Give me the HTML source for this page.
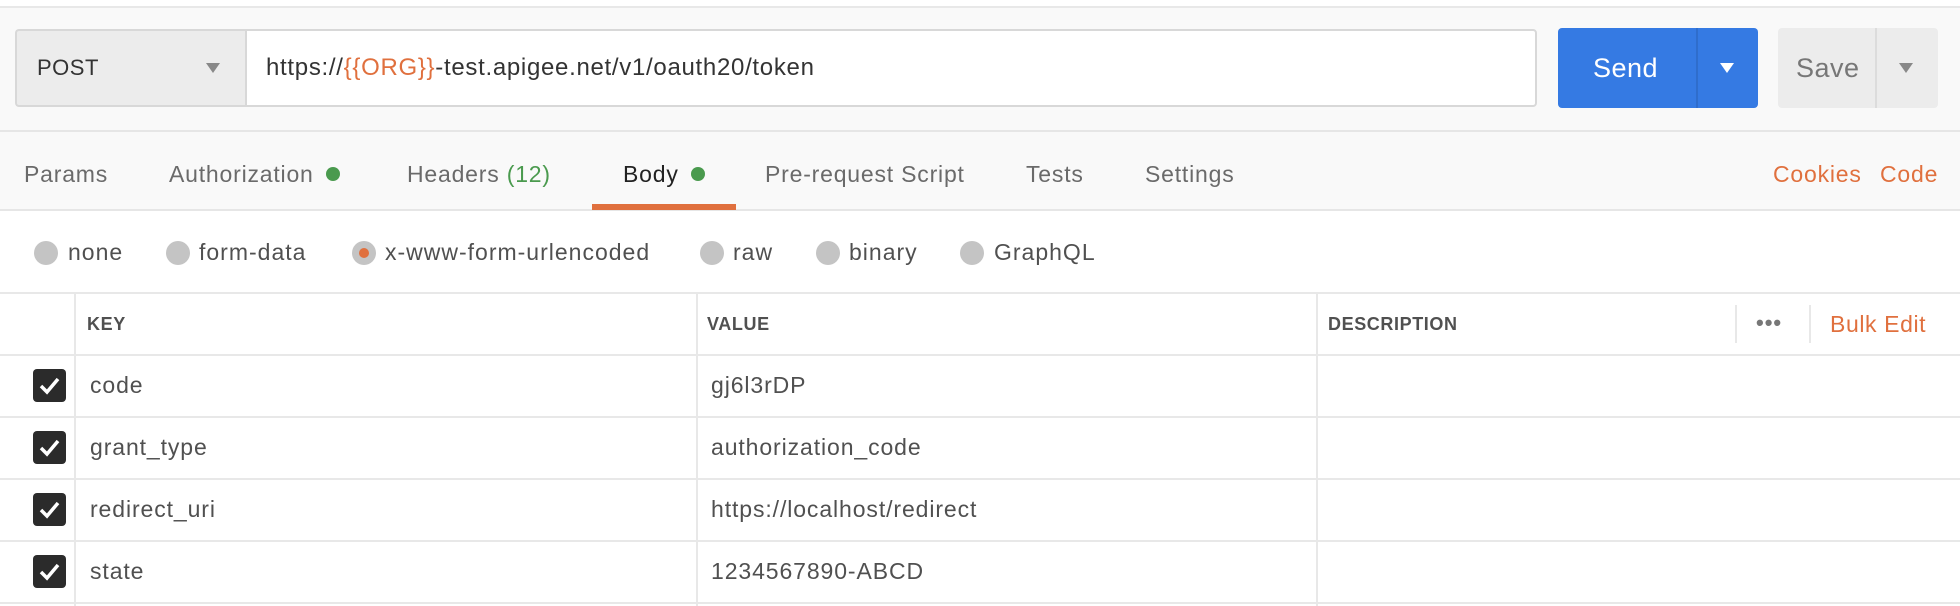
<!DOCTYPE html>
<html><head><meta charset="utf-8"><style>
*{box-sizing:border-box;margin:0;padding:0}
body{width:1960px;height:606px;overflow:hidden;background:#fff;font-family:"Liberation Sans",sans-serif;color:#505050;position:relative}
.a{position:absolute;white-space:nowrap}
.top{left:0;top:6px;width:1960px;height:124px;background:#f9f9f9;border-top:2px solid #e8e8e8}
.tabs{left:0;top:130px;width:1960px;height:81px;background:#f9f9f9;border-top:2px solid #e6e6e6;border-bottom:2px solid #e6e6e6}
.t{font-size:23px;letter-spacing:0.8px;top:161px;color:#6a6a6a}
.dot{display:inline-block;width:14px;height:14px;border-radius:50%;background:#4a9a4e;margin-left:12px;vertical-align:1px}
.r{font-size:23px;letter-spacing:1px;top:239px;color:#505050}
.rc{width:24px;height:24px;border-radius:50%;background:#c4c4c4;top:241px}
.hl{left:0;width:1960px;height:2px;background:#e8e8e8}
.vl{width:2px;background:#e8e8e8;top:293px;height:313px}
.cb{left:33px;width:33px;height:33px;background:#2b2b2b;border-radius:4px}
.cb svg{position:absolute;left:6px;top:7px}
.c{font-size:23px;letter-spacing:0.9px;color:#505050}
.h{font-size:18px;letter-spacing:0.6px;font-weight:bold;top:314px;color:#505050}
</style></head><body>
<div class="a top"></div>
<div class="a" style="left:15px;top:29px;width:232px;height:78px;background:#ececec;border:2px solid #d8d8d8;border-right:none;border-radius:4px 0 0 4px"></div>
<div class="a" style="left:37px;top:55px;font-size:22px;letter-spacing:0.5px;color:#333">POST</div>
<svg class="a" style="left:206px;top:63px" width="14" height="10"><path d="M0 0H14L7 10Z" fill="#888"/></svg>
<div class="a" style="left:245px;top:29px;width:1292px;height:78px;background:#fff;border:2px solid #d8d8d8;border-radius:0 4px 4px 0"></div>
<div class="a" style="left:266px;top:54px;font-size:24px;letter-spacing:0.7px;color:#333">https://<span style="color:#e0703e">{{ORG}}</span>-test.apigee.net/v1/oauth20/token</div>
<div class="a" style="left:1558px;top:28px;width:200px;height:80px;background:#357ae3;border-radius:4px"></div>
<div class="a" style="left:1696px;top:28px;width:2px;height:80px;background:#2f6dcc"></div>
<div class="a" style="left:1593px;top:53px;font-size:27px;letter-spacing:0.5px;color:#fff">Send</div>
<svg class="a" style="left:1720px;top:63px" width="14" height="10"><path d="M0 0H14L7 10Z" fill="#fff"/></svg>
<div class="a" style="left:1778px;top:28px;width:160px;height:80px;background:#ececec;border-radius:4px"></div>
<div class="a" style="left:1875px;top:28px;width:2px;height:80px;background:#dcdcdc"></div>
<div class="a" style="left:1796px;top:53px;font-size:27px;letter-spacing:0.5px;color:#777">Save</div>
<svg class="a" style="left:1899px;top:63px" width="14" height="10"><path d="M0 0H14L7 10Z" fill="#888"/></svg>
<div class="a tabs"></div>
<div class="a t" style="left:24px">Params</div>
<div class="a t" style="left:169px">Authorization<span class="dot"></span></div>
<div class="a t" style="left:407px">Headers <span style="color:#4a9a4e">(12)</span></div>
<div class="a t" style="left:623px;color:#222">Body<span class="dot"></span></div>
<div class="a" style="left:592px;top:204px;width:144px;height:6px;background:#e0703e"></div>
<div class="a t" style="left:765px">Pre-request Script</div>
<div class="a t" style="left:1026px">Tests</div>
<div class="a t" style="left:1145px">Settings</div>
<div class="a t" style="left:1773px;color:#e0703e">Cookies</div>
<div class="a t" style="left:1880px;color:#e0703e">Code</div>
<div class="a rc" style="left:34px"></div><div class="a r" style="left:68px">none</div>
<div class="a rc" style="left:166px"></div><div class="a r" style="left:199px">form-data</div>
<div class="a rc" style="left:352px"></div><div class="a" style="left:359px;top:248px;width:10px;height:10px;border-radius:50%;background:#e0703e"></div><div class="a r" style="left:385px">x-www-form-urlencoded</div>
<div class="a rc" style="left:700px"></div><div class="a r" style="left:733px">raw</div>
<div class="a rc" style="left:816px"></div><div class="a r" style="left:849px">binary</div>
<div class="a rc" style="left:960px"></div><div class="a r" style="left:994px">GraphQL</div>
<div class="a hl" style="top:292px"></div>
<div class="a hl" style="top:354px"></div>
<div class="a hl" style="top:416px"></div>
<div class="a hl" style="top:478px"></div>
<div class="a hl" style="top:540px"></div>
<div class="a hl" style="top:602px"></div>
<div class="a vl" style="left:74px"></div>
<div class="a vl" style="left:696px"></div>
<div class="a vl" style="left:1316px"></div>
<div class="a" style="left:1735px;top:305px;width:2px;height:38px;background:#e8e8e8"></div>
<div class="a" style="left:1809px;top:305px;width:2px;height:38px;background:#e8e8e8"></div>
<div class="a h" style="left:87px">KEY</div>
<div class="a h" style="left:707px">VALUE</div>
<div class="a h" style="left:1328px">DESCRIPTION</div>
<div class="a" style="left:1756px;top:310px;font-size:22px;color:#777;font-weight:bold;letter-spacing:1px">•••</div>
<div class="a" style="left:1830px;top:311px;font-size:23px;letter-spacing:0.6px;color:#e0703e">Bulk Edit</div>
<div class="a cb" style="top:369px"><svg width="21" height="19"><path d="M2 10L8 16L19 3" stroke="#fff" stroke-width="3.5" fill="none"/></svg></div>
<div class="a cb" style="top:431px"><svg width="21" height="19"><path d="M2 10L8 16L19 3" stroke="#fff" stroke-width="3.5" fill="none"/></svg></div>
<div class="a cb" style="top:493px"><svg width="21" height="19"><path d="M2 10L8 16L19 3" stroke="#fff" stroke-width="3.5" fill="none"/></svg></div>
<div class="a cb" style="top:555px"><svg width="21" height="19"><path d="M2 10L8 16L19 3" stroke="#fff" stroke-width="3.5" fill="none"/></svg></div>
<div class="a c" style="left:90px;top:372px">code</div>
<div class="a c" style="left:711px;top:372px">gj6l3rDP</div>
<div class="a c" style="left:90px;top:434px">grant_type</div>
<div class="a c" style="left:711px;top:434px">authorization_code</div>
<div class="a c" style="left:90px;top:496px">redirect_uri</div>
<div class="a c" style="left:711px;top:496px">https://localhost/redirect</div>
<div class="a c" style="left:90px;top:558px">state</div>
<div class="a c" style="left:711px;top:558px">1234567890-ABCD</div>
</body></html>
